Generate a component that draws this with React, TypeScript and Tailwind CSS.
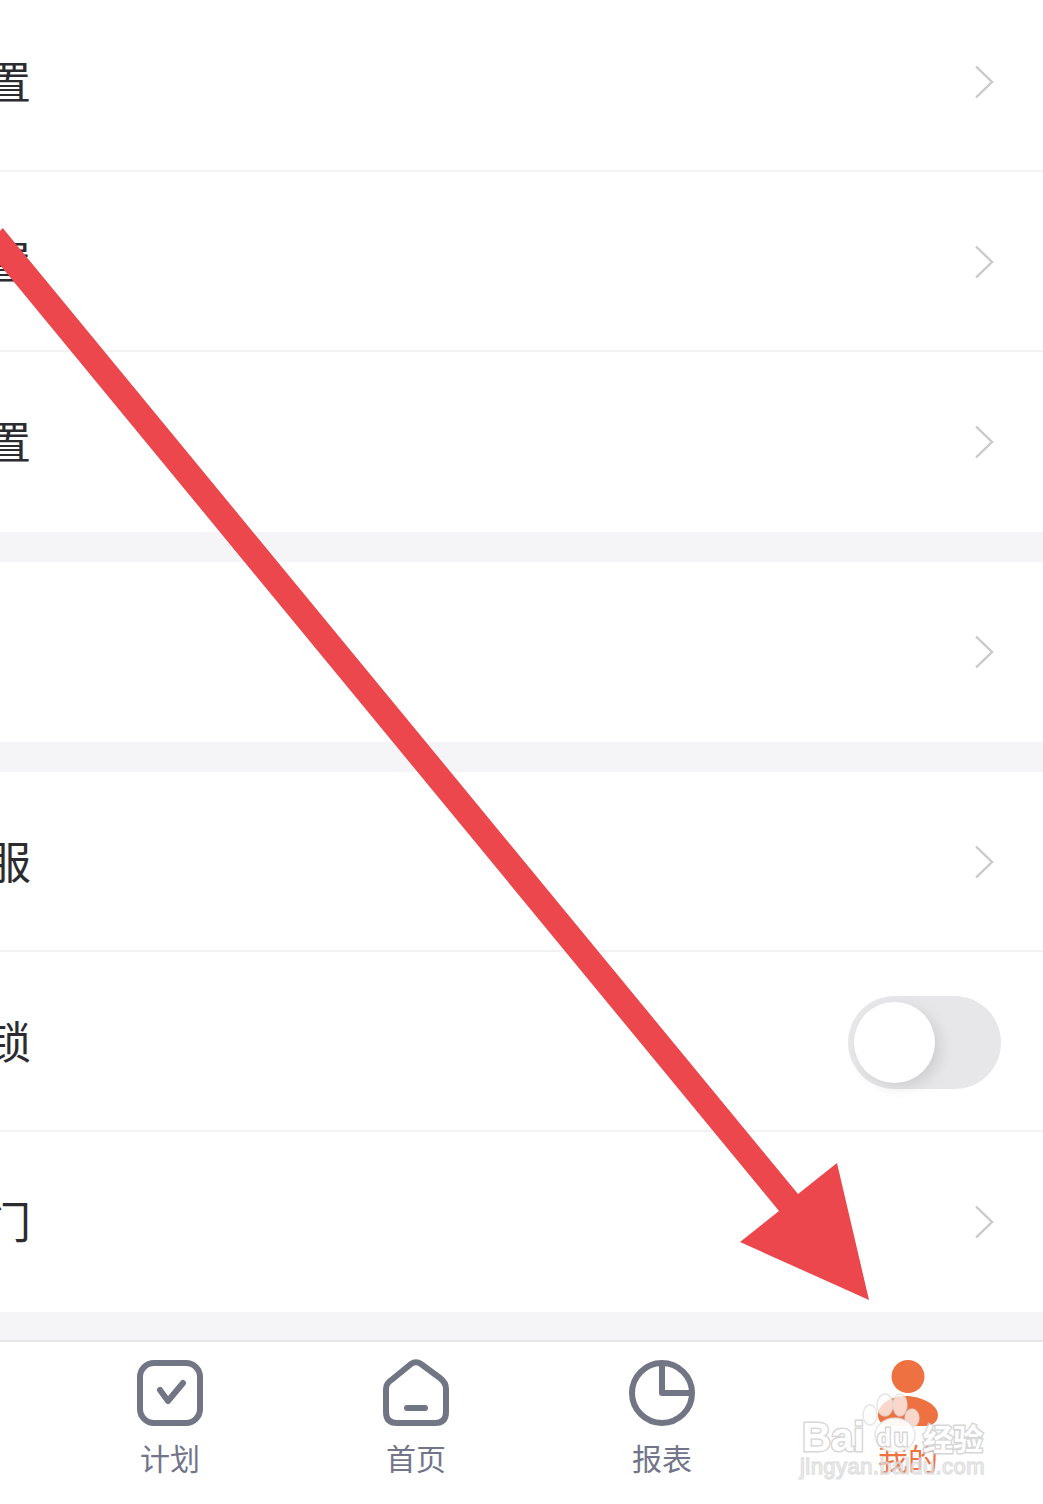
import React from "react";

const cjk = "font-['Noto_Sans_CJK_SC','Noto_Sans',sans-serif]";

function Chevron({ border }: { border?: boolean }) {
  return (
    <svg width="20" height="34" viewBox="0 0 20 34" fill="none" className={`shrink-0 ${border ? "mt-[2px]" : ""}`}>
      <path d="M2 1.5 L18 17 L2 32.5" stroke="#c9c9cd" strokeWidth="2.4" />
    </svg>
  );
}

function Toggle() {
  return (
    <div className="mt-[2px] h-[93px] w-[153px] rounded-full bg-[#e7e7e9] p-[6px]">
      <div className="h-[81px] w-[81px] rounded-full bg-white shadow-[6px_5px_14px_rgba(0,0,0,0.10)]" />
    </div>
  );
}

function Row({ label, h, border, toggle, className = "" }: { label?: string; h: string; border?: boolean; toggle?: boolean; className?: string }) {
  return (
    <div className={`flex items-center justify-between bg-white ${h} ${border ? "border-b-2 border-[#f2f2f3]" : ""} ${toggle ? "pr-[42px]" : "pr-[49px]"} ${className}`}>
      <span className={`-ml-[13px] text-[44px] leading-none text-[#2c2c30] ${border ? "pb-[2px]" : "pb-[4px]"} ${cjk}`}>{label}</span>
      {toggle ? <Toggle /> : <Chevron border={border} />}
    </div>
  );
}

function Gap({ h }: { h: string }) {
  return <div className={`${h} bg-[#f5f5f7]`} />;
}

function PlanIcon() {
  return (
    <svg width="66" height="68" viewBox="0 0 66 68" fill="none" stroke="#727583" strokeWidth="6" strokeLinecap="round" strokeLinejoin="round">
      <rect x="3" y="4" width="60" height="60" rx="14" />
      <path d="M23 31 L31 42 L46 24" />
    </svg>
  );
}

function HomeIcon() {
  return (
    <svg width="66" height="68" viewBox="0 0 66 68" fill="none" stroke="#727583" strokeWidth="6" strokeLinecap="round" strokeLinejoin="round">
      <path d="M9 20.5 L28 5 Q33 1.5 38 5 L57 19 Q63 23.5 63 30 L63 53 Q63 64 52 64 L14 64 Q3 64 3 53 L3 30 Q3 24 9 20.5 Z" />
      <path d="M24 49 L42 49" />
    </svg>
  );
}

function ReportIcon() {
  return (
    <svg width="66" height="68" viewBox="0 0 66 68" fill="none" stroke="#727583" strokeWidth="6" strokeLinejoin="round">
      <circle cx="33" cy="34" r="30" />
      <path d="M33 4 L33 34 L63 34" />
    </svg>
  );
}

function MineIcon() {
  return (
    <svg width="66" height="68" viewBox="0 0 66 68" fill="#ee7142">
      <circle cx="33" cy="17.5" r="16.5" />
      <path d="M3 56 C3 45 16 37 30 37 C47 37 63 46 63 56 C63 63 57 67 50 67 L16 67 C8 67 3 63 3 56 Z" />
    </svg>
  );
}

function Tab({ icon, label, active }: { icon: React.ReactNode; label: string; active?: boolean }) {
  return (
    <div className="flex flex-col items-center">
      {icon}
      <span className={`mt-[10px] text-[30px] leading-[40px] ${active ? "text-[#ee7142]" : "text-[#72758a]"} ${cjk}`}>{label}</span>
    </div>
  );
}

function Arrow() {
  return (
    <svg className="pointer-events-none absolute left-0 top-0" width="1043" height="1504" viewBox="0 0 1043 1504">
      <polygon fill="#eb474d" points="0,265 779,1211 740,1242 869,1300 837,1163 798,1194 2.7,228 0,231" />
    </svg>
  );
}

function Watermark() {
  const solid = "text-white [-webkit-text-stroke:3px_rgba(205,205,205,0.8)] [paint-order:stroke_fill] font-['Liberation_Sans',sans-serif]";
  const thin = "text-white/60 [-webkit-text-stroke:1.5px_rgba(205,205,205,0.6)] font-['Liberation_Sans',sans-serif]";
  return (
    <div className="pointer-events-none absolute left-[798px] top-[1392px] h-[96px] w-[195px]">
      <svg className="absolute left-[62px] top-0" width="90" height="64" viewBox="0 0 90 64" fill="#ffffff" fillOpacity="0.72" stroke="#dcdcdc" strokeOpacity="0.7" strokeWidth="1.5">
        <ellipse cx="10" cy="23" rx="7" ry="10" />
        <ellipse cx="25" cy="13" rx="8" ry="11" />
        <ellipse cx="40" cy="13" rx="7" ry="11" />
        <ellipse cx="52" cy="26" rx="7" ry="9" />
        <ellipse cx="35" cy="43" rx="20" ry="17" fillOpacity="0.95" />
      </svg>
      <span className={`absolute left-[4px] top-[23px] text-[40px] font-bold leading-[44px] ${solid}`}>Bai</span>
      <span className={`absolute left-[79px] top-[33px] text-[23px] font-bold leading-[26px] tracking-[3px] ${solid}`}>du</span>
      <span className={`absolute left-[125px] top-[25px] text-[30px] font-bold leading-[40px] ${solid} ${cjk}`}>经验</span>
      <span className={`absolute left-[2px] top-[61px] text-[22px] leading-[28px] tracking-[0.45px] ${thin}`}>jingyan.baidu.com</span>
    </div>
  );
}

export default function App() {
  return (
    <div className="relative h-[1504px] w-[1043px] overflow-hidden bg-white">
      <Row label="置" h="h-[180px]" border className="-mt-[8px]" />
      <Row label="置" h="h-[180px]" border />
      <Row label="置" h="h-[180px]" />
      <Gap h="h-[30px]" />
      <Row h="h-[180px]" />
      <Gap h="h-[30px]" />
      <Row label="服" h="h-[180px]" border />
      <Row label="锁" h="h-[180px]" border toggle />
      <Row label="门" h="h-[180px]" />
      <Gap h="h-[28px]" />

      <div className="h-[164px] border-t-2 border-[#e6e6e7] bg-white pl-[47px] pr-[12px] pt-[17px]">
        <div className="grid grid-cols-4">
          <Tab icon={<PlanIcon />} label="计划" />
          <Tab icon={<HomeIcon />} label="首页" />
          <Tab icon={<ReportIcon />} label="报表" />
          <Tab icon={<MineIcon />} label="我的" active />
        </div>
      </div>

      <Watermark />
      <Arrow />
    </div>
  );
}
